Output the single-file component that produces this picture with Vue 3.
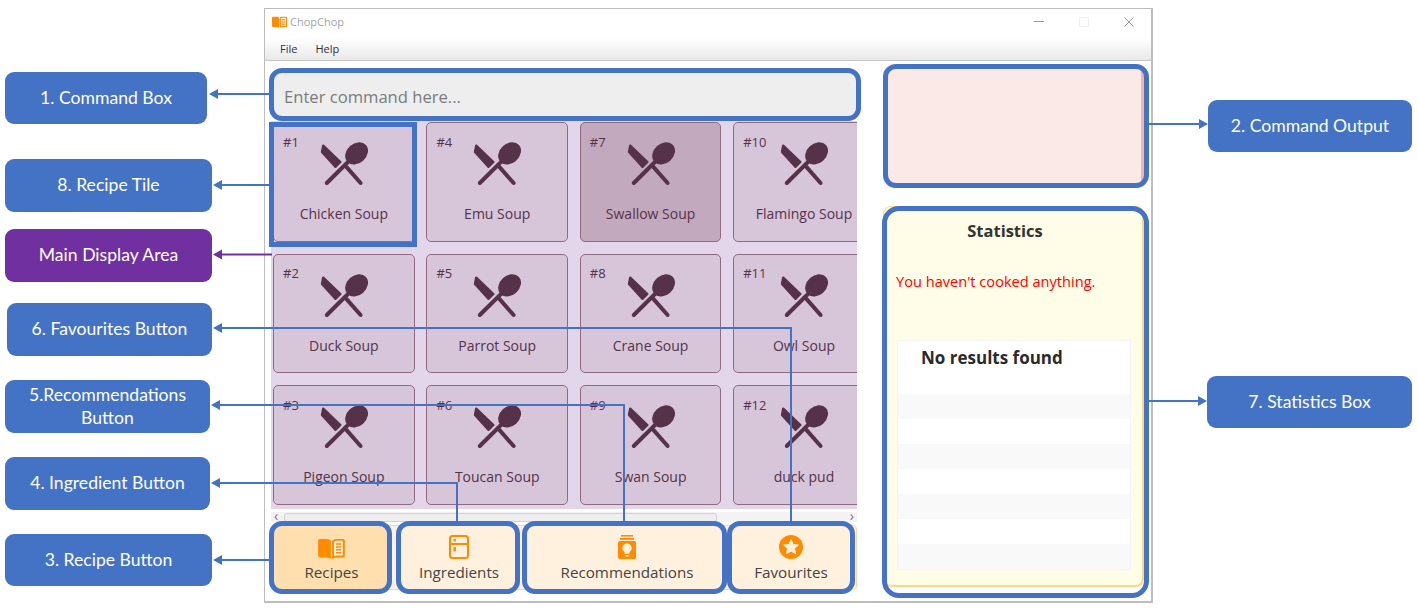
<script setup>
const tiles = [
  { id: 1, name: 'Chicken Soup' },
  { id: 4, name: 'Emu Soup' },
  { id: 7, name: 'Swallow Soup', active: true },
  { id: 10, name: 'Flamingo Soup' },
  { id: 2, name: 'Duck Soup' },
  { id: 5, name: 'Parrot Soup' },
  { id: 8, name: 'Crane Soup' },
  { id: 11, name: 'Owl Soup' },
  { id: 3, name: 'Pigeon Soup' },
  { id: 6, name: 'Toucan Soup' },
  { id: 9, name: 'Swan Soup' },
  { id: 12, name: 'duck pud' },
]

const callouts = [
  { text: '1. Command Box', x: 5, y: 72, w: 202, h: 52 },
  { text: '8. Recipe Tile', x: 5, y: 159, w: 207, h: 53 },
  { text: 'Main Display Area', x: 5, y: 229, w: 207, h: 53, purple: true },
  { text: '6. Favourites Button', x: 7, y: 303, w: 205, h: 53 },
  { text: '5.Recommendations Button', x: 5, y: 380, w: 205, h: 53 },
  { text: '4. Ingredient Button', x: 5, y: 457, w: 205, h: 53 },
  { text: '3. Recipe Button', x: 5, y: 534, w: 207, h: 52 },
  { text: '2. Command Output', x: 1208, y: 100, w: 204, h: 52 },
  { text: '7. Statistics Box', x: 1207, y: 376, w: 205, h: 52 },
]

// blue outlines drawn on top of the app screenshot
const outlines = [
  { x: 269, y: 68, w: 592, h: 53 },
  { x: 269, y: 122, w: 148, h: 125, square: true },
  { x: 269, y: 521, w: 123, h: 73 },
  { x: 396, y: 521, w: 124, h: 73 },
  { x: 522, y: 521, w: 205, h: 73 },
  { x: 727, y: 521, w: 128, h: 73 },
  { x: 883, y: 64, w: 266, h: 124 },
  { x: 882, y: 206, w: 267, h: 392, big: true },
]

const boxStyle = (b) => ({
  left: b.x + 'px',
  top: b.y + 'px',
  width: b.w + 'px',
  height: b.h + 'px',
})

const lines = [
  '270,94 214,94',
  '270,185 218,185',
  '791,522 791,328 218,328',
  '624,522 624,405 216,405',
  '457,522 457,483 216,483',
  '269,560 218,560',
  '1148,124 1202,124',
  '1148,401 1201,401',
]
const heads = [
  '209,94 218,89 218,99',
  '213,185 222,180 222,190',
  '213,328 222,323 222,333',
  '211,405 220,400 220,410',
  '211,483 220,478 220,488',
  '213,560 222,555 222,565',
  '1208,124 1199,119 1199,129',
  '1207,401 1198,396 1198,406',
]
</script>

<template>
  <div class="page">
    <div class="window">
      <div class="titlebar">
        <svg class="app-icon" viewBox="0 0 28 22" width="15" height="12">
          <use href="#book" />
        </svg>
        <span class="app-name">ChopChop</span>
        <div class="controls">
          <span class="minimize"></span>
          <span class="maximize"></span>
          <svg width="10" height="10" viewBox="0 0 10 10">
            <path d="M0.5 0.5 L9.5 9.5 M9.5 0.5 L0.5 9.5" stroke="#9a9a9a" stroke-width="1" />
          </svg>
        </div>
      </div>
      <div class="menubar">
        <span>File</span>
        <span>Help</span>
      </div>

      <div class="content">
        <div class="left">
          <div class="command">Enter command here...</div>
          <div class="tiles">
            <div class="tile" :class="{ active: t.active }" v-for="t in tiles" :key="t.id">
              <span class="num">#{{ t.id }}</span>
              <svg class="cutlery" viewBox="0 0 48 46" width="48" height="46">
                <path class="blade" d="M3.2 3.6 L20.4 20 L15.4 24.8 L2 10 Z" />
                <path d="M26.6 25.2 L40.6 41" class="stem" />
                <path d="M6.8 41 L28 20" class="stem" />
                <ellipse cx="36.6" cy="11.4" rx="12.6" ry="9.8" transform="rotate(-42 36.6 11.4)" />
              </svg>
              <span class="name">{{ t.name }}</span>
            </div>
          </div>
          <div class="scrollbar">
            <span class="arrow">‹</span>
            <span class="thumb"></span>
            <span class="arrow end">›</span>
          </div>
          <div class="tabs">
            <div class="tab selected tab-recipes">
              <svg viewBox="0 0 28 22" width="27" height="21"><use href="#book" /></svg>
              <span>Recipes</span>
            </div>
            <div class="tab tab-ingredients">
              <svg viewBox="0 0 20 24" width="20" height="24">
                <rect x="1" y="1" width="18" height="22" rx="2.5" fill="none" stroke="#ff8c00" stroke-width="2" />
                <path d="M1 9 H19" stroke="#ff8c00" stroke-width="2" />
                <rect x="4.5" y="4" width="2.4" height="2.4" fill="#ff8c00" />
                <rect x="4.5" y="12" width="2.4" height="4.5" fill="#ff8c00" />
              </svg>
              <span>Ingredients</span>
            </div>
            <div class="tab tab-recs">
              <svg viewBox="0 0 18 24" width="18" height="24">
                <rect x="3" y="0" width="12" height="1.6" fill="#ff8c00" />
                <rect x="2" y="3" width="14" height="1.8" fill="#ff8c00" />
                <path d="M1.6 6 H16.4 Q18 6 18 8 V22.6 Q18 24 16.4 24 H1.6 Q0 24 0 22.6 V8 Q0 6 1.6 6 Z" fill="#ff8c00" />
                <path d="M9 8.6 A4.6 4.6 0 0 1 11.6 17 L11.2 19 H6.8 L6.4 17 A4.6 4.6 0 0 1 9 8.6 Z" fill="#fff1de" />
                <rect x="7.4" y="20" width="3.2" height="1.6" fill="#fff1de" />
              </svg>
              <span>Recommendations</span>
            </div>
            <div class="tab tab-favs">
              <svg viewBox="0 0 24 24" width="24" height="24">
                <circle cx="12" cy="12" r="12" fill="#ff8c00" />
                <path d="M12 4.6 L14.2 9.5 L19.4 10 L15.5 13.5 L16.6 18.7 L12 16.1 L7.4 18.7 L8.5 13.5 L4.6 10 L9.8 9.5 Z" fill="#fff1de" stroke="#fff1de" stroke-linejoin="round" />
              </svg>
              <span>Favourites</span>
            </div>
          </div>
        </div>

        <div class="right">
          <div class="output"></div>
          <div class="stats">
            <h2>Statistics</h2>
            <p class="empty-msg">You haven't cooked anything.</p>
            <div class="results">
              <div class="row first">No results found</div>
              <div class="row" v-for="n in 7" :key="n"></div>
            </div>
          </div>
        </div>
      </div>
    </div>

    <svg class="wires" width="1418" height="611" viewBox="0 0 1418 611">
      <defs>
        <g id="book">
          <path d="M0 3 Q0 1 2 1 H9 Q12 1 13.4 3 V22 Q12 20.4 9 20.4 H2 Q0 20.4 0 18.6 Z" fill="#ff8c00" />
          <path d="M14.6 3 Q16 1 19 1 H26 Q28 1 28 3 V18.6 Q28 20.4 26 20.4 H19 Q16 20.4 14.6 22 Z" fill="#ff8c00" />
          <path d="M16.6 4 Q18 3 20 3 H25.8 V18.4 H19 Q17.6 18.4 16.6 19 Z" fill="#fff1de" />
          <path d="M18.6 6.4 H24 M18.6 9.4 H24 M18.6 12.4 H24 M18.6 15.4 H24" stroke="#ff8c00" stroke-width="1.6" />
        </g>
      </defs>
      <polyline v-for="l in lines" :key="l" :points="l" class="wire" />
      <polygon v-for="h in heads" :key="h" :points="h" class="head" />
      <polyline points="272,254.5 218,254.5" class="wire purple" />
      <polygon points="213,254.5 222,249.5 222,259.5" class="head purple" />
    </svg>

    <div
      v-for="o in outlines"
      :key="o.x + '-' + o.y"
      class="outline"
      :class="{ square: o.square, big: o.big }"
      :style="boxStyle(o)"
    ></div>

    <div
      v-for="c in callouts"
      :key="c.text"
      class="callout"
      :class="{ purple: c.purple }"
      :style="boxStyle(c)"
    >{{ c.text }}</div>
  </div>
</template>

<style scoped>
.page {
  position: relative;
  width: 1418px;
  height: 611px;
  overflow: hidden;
  background: #fff;
  font-family: "Open Sans", "Noto Sans", sans-serif;
}

.window {
  position: absolute;
  left: 264px;
  top: 8px;
  width: 889px;
  height: 595px;
  box-sizing: border-box;
  border: 1px solid #bdbdbd;
  border-right-width: 2px;
  border-bottom-width: 2px;
  background: #fff;
  display: flex;
  flex-direction: column;
}

.titlebar {
  height: 29px;
  display: flex;
  align-items: center;
  padding: 0 0 4px 7px;
  box-sizing: border-box;
  flex: none;
}

.app-name {
  margin-left: 3px;
  font-size: 11px;
  color: #a3a3a3;
}

.controls {
  margin-left: auto;
  margin-right: 17px;
  display: flex;
  align-items: center;
  gap: 35px;
}

.minimize {
  width: 10px;
  height: 1px;
  background: #9a9a9a;
}

.maximize {
  width: 8px;
  height: 8px;
  border: 1px solid #efefef;
}

.menubar {
  height: 23px;
  flex: none;
  box-sizing: border-box;
  border-bottom: 1px solid #c4c4c4;
  background: linear-gradient(#ffffff, #e9e9e9);
  display: flex;
  align-items: center;
  gap: 18px;
  padding: 0 0 2px 15px;
  font-size: 11px;
  color: #333;
}

.content {
  flex: 1;
  display: flex;
  min-height: 0;
}

.left {
  width: 586px;
  margin-left: 6px;
  display: flex;
  flex-direction: column;
}

.command {
  height: 52px;
  margin-top: 8px;
  margin-left: 2px;
  box-sizing: border-box;
  background: #eeeeee;
  border-radius: 8px;
  padding: 2px 0 0 11px;
  display: flex;
  align-items: center;
  font-size: 16.6px;
  color: #7b7b7b;
}

.tiles {
  height: 388px;
  flex: none;
  box-sizing: border-box;
  padding: 1px 0 0 2px;
  background: #e4d6ea;
  overflow: hidden;
  display: grid;
  grid-template-columns: repeat(4, 141.7px);
  grid-auto-rows: 119.5px;
  column-gap: 11.7px;
  row-gap: 12px;
}

.tile {
  position: relative;
  box-sizing: border-box;
  background: #d7c6d9;
  border: 1.5px solid #8f6b82;
  border-radius: 5px;
  display: flex;
  flex-direction: column;
  align-items: center;
  color: #55324a;
}

.tile.active {
  background: #c3a9bd;
}

.num {
  position: absolute;
  left: 9px;
  top: 10.5px;
  font-size: 13px;
  line-height: 16px;
}

.cutlery {
  margin-top: 19px;
  fill: #55324a;
}

.blade {
  stroke: #55324a;
  stroke-width: 2.4;
  stroke-linejoin: round;
}

.stem {
  fill: none;
  stroke: #55324a;
  stroke-width: 4;
  stroke-linecap: round;
}

.name {
  margin-top: 16px;
  font-size: 14px;
  line-height: 20px;
  white-space: nowrap;
}

.scrollbar {
  height: 10px;
  margin-top: 3px;
  flex: none;
  background: #f3f3f3;
  position: relative;
  display: flex;
  align-items: center;
}

.arrow {
  position: absolute;
  left: 3px;
  top: -3px;
  font-size: 14px;
  line-height: 13px;
  color: #777;
}

.arrow.end {
  left: auto;
  right: 3px;
}

.thumb {
  position: absolute;
  left: 13px;
  width: 433px;
  top: 1px;
  height: 9px;
  box-sizing: border-box;
  background: #eeeeee;
  border: 1px solid #d2d2d2;
  border-radius: 3px;
}

.tabs {
  height: 65px;
  margin-top: 3px;
  flex: none;
  box-sizing: border-box;
  background: #fff1de;
  border: 1px solid #ffd699;
  border-radius: 4px;
  display: flex;
}

.tab {
  flex: none;
  box-sizing: border-box;
  border-radius: 10px;
  display: flex;
  flex-direction: column;
  align-items: center;
  padding-top: 9px;
  font-size: 15.2px;
  color: #444;
  background: #fff1de;
}

.tab span {
  margin-top: auto;
  line-height: 20px;
  padding-bottom: 7px;
}

.tab.selected {
  background: #ffdfae;
}

.tab-recipes {
  width: 119px;
}

.tab-recipes svg {
  margin-top: 3px;
}

.tab-ingredients {
  width: 124px;
  margin-left: 6px;
}

.tab-recs {
  width: 208px;
  margin-left: 2px;
}

.tab-favs {
  width: 120px;
}

.right {
  margin-left: 26px;
  width: 261px;
  display: flex;
  flex-direction: column;
}

.output {
  height: 122px;
  margin-top: 5px;
  box-sizing: border-box;
  background: #fbe9e7;
  border-right: 3px solid #fbb3a0;
  border-radius: 8px;
}

.stats {
  height: 381px;
  margin-top: 18px;
  box-sizing: border-box;
  background: #fffde7;
  border: 1px solid #ffd980;
  border-right-width: 2px;
  border-bottom-width: 2px;
  border-radius: 8px;
  padding-top: 13px;
  color: #333;
}

.stats h2 {
  margin: 0;
  text-align: center;
  font-size: 16.5px;
  line-height: 22px;
  font-weight: 700;
  padding-right: 16px;
}

.empty-msg {
  margin: 29px 0 0 12px;
  font-size: 14.6px;
  line-height: 20px;
  color: #ff0000;
}

.results {
  margin: 49px 0 0 13px;
  width: 234px;
  box-sizing: border-box;
  border: 1px solid #f4f4f4;
}

.row {
  height: 25px;
  background: #fff;
}

.row:nth-child(even) {
  background: #f9f9f9;
}

.row.first {
  height: 53px;
  padding: 5px 0 0 23px;
  box-sizing: border-box;
  font-size: 17px;
  line-height: 24px;
  font-weight: 700;
  color: #2b2b2b;
}

.wires {
  position: absolute;
  left: 0;
  top: 0;
  pointer-events: none;
}

.wire {
  fill: none;
  stroke: #4472c4;
  stroke-width: 2;
}

.wire.purple {
  stroke: #7030a0;
}

.head {
  fill: #4472c4;
}

.head.purple {
  fill: #7030a0;
}

.outline {
  position: absolute;
  box-sizing: border-box;
  border: 5px solid #4472c4;
  border-radius: 13px;
}

.outline.big {
  border-radius: 17px;
}

.outline.square {
  border-radius: 0;
}

.callout {
  position: absolute;
  box-sizing: border-box;
  background: #4472c4;
  border-radius: 9px;
  padding: 0 16px 2px;
  display: flex;
  align-items: center;
  justify-content: center;
  text-align: center;
  font-family: Lato, "Open Sans", sans-serif;
  font-size: 17.6px;
  line-height: 23px;
  color: #fff;
}

.callout.purple {
  background: #7030a0;
}
</style>
